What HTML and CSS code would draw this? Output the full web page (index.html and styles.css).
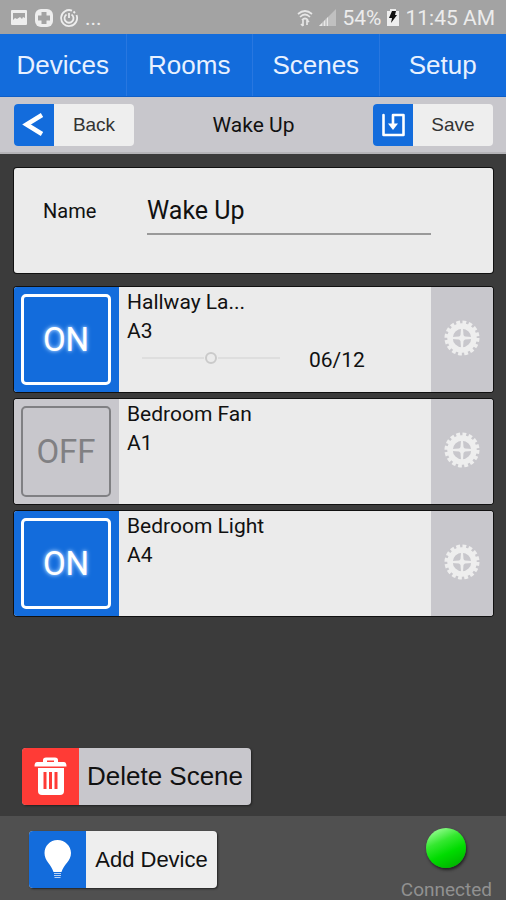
FILE: index.html
```html
<!DOCTYPE html>
<html lang="en">
<head>
<meta charset="utf-8">
<meta name="viewport" content="width=device-width, initial-scale=1">
<title>Wake Up</title>
<link rel="stylesheet" href="styles.css">
</head>
<body>
<svg class="defs" width="0" height="0" aria-hidden="true">
  <symbol id="gear" viewBox="-18 -18 36 36">
    <circle r="12" fill="none" stroke="currentColor" stroke-width="5.500"/>
    <circle r="15.500" fill="none" stroke="currentColor" stroke-width="4" stroke-dasharray="3.700 2.387"/>
    <path d="M-1-10H1L1.500-3Q2-2 3-1.500L10-1V1L3 1.500Q2 2 1.500 3L1 10H-1L-1.500 3Q-2 2-3 1.500L-10 1V-1L-3-1.500Q-2-2-1.500-3Z" fill="currentColor"/>
  </symbol>
</svg>
<div class="app">
  <header class="status">
    <div class="status-group">
      <svg width="18" height="18" viewBox="0 0 18 18"><path fill="#eee" fill-rule="evenodd" d="M2 1H16Q17 1 17 2V15Q17 16 16 16H2Q1 16 1 15V2Q1 1 2 1ZM3 4V11L5 9L7 10L10 8L12 10L13 8L15 9V4Z"/></svg>
      <svg width="18" height="18" viewBox="0 0 18 18"><rect width="18" height="18" rx="6" fill="#eee"/><path d="M9 3V15M3 9H15" stroke="#a3a3a3" stroke-width="5"/></svg>
      <svg width="18" height="18" viewBox="0 0 18 18" fill="none" stroke="#eee" stroke-width="1.8"><path d="M12 1.600A8 8 0 1 0 16.500 6M13.500 2.500L15 4"/><path d="M6.500 5.500A4.500 4.500 0 1 0 11.500 5.500M9 4V9"/></svg>
      <span>...</span>
    </div>
    <div class="status-group status-right">
      <svg width="16" height="18" viewBox="0 0 16 18" fill="none" stroke="#e6e6e6" stroke-width="1.700"><path d="M1 5Q8-1 15 5M3 8Q8 3 13 8M5 11Q8 8 11 11"/><path d="M6 11V17M4 15L6 17M10 16V11M10 11L12 13"/></svg>
      <svg width="17" height="17" viewBox="0 0 17 17"><path d="M0 17L17 0V17Z" fill="#c0c0c0"/><path d="M0 17L9 8V17Z" fill="#e8e8e8"/><path d="M4 12V17M7 9V17" stroke="#aaa"/></svg>
      <span>54%</span>
      <svg width="12" height="17" viewBox="0 0 12 17"><path d="M3 0H9V2H12V17H0V2H3Z" fill="#eee"/><path d="M5 2H9L8 6H10L4 14L5 9H2Z" fill="#111"/></svg>
      <span class="clock">11:45 AM</span>
    </div>
  </header>

  <nav class="tabs">
    <a href="#devices">Devices</a>
    <a href="#rooms">Rooms</a>
    <a href="#scenes">Scenes</a>
    <a href="#setup">Setup</a>
  </nav>

  <div class="toolbar">
    <button class="btn btn-small" type="button">
      <span class="btn-icon"><svg width="40" height="42" viewBox="0 0 40 42"><path d="M28 11L12.500 20.500L28 30" fill="none" stroke="#fff" stroke-width="4.500"/></svg></span>
      <span class="btn-label">Back</span>
    </button>
    <h1>Wake Up</h1>
    <button class="btn btn-small" type="button">
      <span class="btn-icon"><svg width="40" height="42" viewBox="0 0 40 42" fill="none" stroke="#fff" stroke-width="2.600" stroke-linejoin="round" stroke-linecap="round"><path d="M10.500 11V31H30.500V11H20V22"/><path d="M15 19.500H25L20 26Z" fill="#fff" stroke="none"/></svg></span>
      <span class="btn-label">Save</span>
    </button>
  </div>

  <main>
    <section class="panel name-panel">
      <label for="scene-name">Name</label>
      <input id="scene-name" type="text" value="Wake Up">
    </section>

    <ul class="devices">
      <li class="panel device">
        <button class="toggle on" type="button" aria-pressed="true"><span>ON</span></button>
        <div class="info">
          <h2>Hallway La...</h2>
          <p>A3</p>
          <div class="dimmer">
            <input type="range" min="0" max="12" value="6" aria-label="Level">
            <span>06/12</span>
          </div>
        </div>
        <button class="gear" type="button" aria-label="Settings"><svg width="36" height="36"><use href="#gear"/></svg></button>
      </li>
      <li class="panel device">
        <button class="toggle" type="button" aria-pressed="false"><span>OFF</span></button>
        <div class="info">
          <h2>Bedroom Fan</h2>
          <p>A1</p>
        </div>
        <button class="gear" type="button" aria-label="Settings"><svg width="36" height="36"><use href="#gear"/></svg></button>
      </li>
      <li class="panel device">
        <button class="toggle on" type="button" aria-pressed="true"><span>ON</span></button>
        <div class="info">
          <h2>Bedroom Light</h2>
          <p>A4</p>
        </div>
        <button class="gear" type="button" aria-label="Settings"><svg width="36" height="36"><use href="#gear"/></svg></button>
      </li>
    </ul>

    <button class="btn btn-large delete" type="button">
      <span class="btn-icon"><svg width="57" height="57" viewBox="0 0 57 57"><path d="M21 14V12Q21 9.500 24 9.500H33Q36 9.500 36 12V14H42Q44.500 14 44.500 18.500H12.500Q12.500 14 15 14ZM25 14H32V12.500H25Z" fill="#fff" fill-rule="evenodd"/><path d="M16 20H42V43Q42 47 38 47H20Q16 47 16 43Z" fill="#fff"/><path d="M23 24V41M28.500 24V41M34 24V41" stroke="#ff3b36" stroke-width="3"/></svg></span>
      <span class="btn-label">Delete Scene</span>
    </button>
  </main>

  <footer>
    <button class="btn btn-large add" type="button">
      <span class="btn-icon"><svg width="57" height="57" viewBox="0 0 57 57"><path d="M28.500 9C21 9 15.500 15 15.500 22C15.500 30 22 33 24.500 41H32.500C35 33 42 30 42 22C42 15 36 9 28.500 9Z" fill="#fff"/><path d="M25 42.500H32M25 44.500H32M25.500 46.500H31.500" stroke="#b9d3f5" stroke-width="1.200"/></svg></span>
      <span class="btn-label">Add Device</span>
    </button>
    <div class="connection">
      <span class="led"></span>
      <span>Connected</span>
    </div>
  </footer>
</div>
</body>
</html>
```
FILE: styles.css
```css
* {
  box-sizing: border-box;
}

body {
  margin: 0;
  background: #3b3b3b;
  color: #111;
  font-family: Roboto, "Liberation Sans", sans-serif;
}

button,
input {
  border: 0;
  padding: 0;
  margin: 0;
  font: inherit;
  color: inherit;
  background: none;
}

svg {
  display: block;
}

h1,
h2,
p,
ul {
  margin: 0;
  padding: 0;
  font-weight: 400;
}

.defs {
  position: absolute;
}

.app {
  display: flex;
  flex-direction: column;
  min-height: 100vh;
}

.status {
  display: flex;
  justify-content: space-between;
  align-items: center;
  height: 34px;
  padding: 1px 11px 0 10px;
  background: #a3a3a3;
  color: #ececec;
  font-size: 21px;
  line-height: 24px;
}

.status-group {
  display: flex;
  align-items: center;
  gap: 7px;
}

.status-right {
  gap: 6px;
}

.tabs {
  display: grid;
  grid-template-columns: repeat(4, 1fr);
  height: 63px;
  background: #136cdc;
  border-bottom: 1px solid #0f5fc8;
}

.tabs a {
  display: flex;
  align-items: center;
  justify-content: center;
  color: #e8f1ff;
  font-family: "Liberation Sans", sans-serif;
  font-size: 26px;
  text-decoration: none;
}

.tabs a:not(:last-child) {
  border-right: 1px solid #2877e0;
}

.toolbar {
  display: flex;
  align-items: center;
  justify-content: space-between;
  height: 57px;
  padding: 0 13px 0 14px;
  background: #c8c7cc;
  border-bottom: 2px solid #b5b4b8;
}

.toolbar h1 {
  font-size: 21px;
}

.btn {
  display: flex;
  align-items: stretch;
  overflow: hidden;
  border-radius: 4px;
  background: #eee;
  font-family: "Liberation Sans", sans-serif;
}

.btn-icon {
  background: #136cdc;
}

.btn-label {
  display: flex;
  flex: 1;
  align-items: center;
  justify-content: center;
}

.btn-small {
  width: 120px;
  height: 42px;
  font-size: 19px;
  color: #333;
}

.btn-large {
  height: 57px;
  box-shadow: 1px 1px 2px #222;
}

main {
  display: flex;
  flex: 1;
  flex-direction: column;
  padding: 14px 13px 11px 14px;
}

.panel {
  background: #ebebeb;
  border-radius: 3px;
  box-shadow: 0 0 0 1px #111;
}

.name-panel {
  display: flex;
  align-items: flex-start;
  height: 105px;
  padding: 22px 62px 0 29px;
  margin-bottom: 14px;
}

.name-panel label {
  width: 104px;
  font-size: 20px;
  line-height: 42px;
}

.name-panel input {
  flex: 1;
  min-width: 0;
  height: 45px;
  padding-bottom: 2px;
  border-bottom: 2px solid #999;
  border-radius: 0;
  font-size: 25px;
  outline: 0;
}

.devices {
  display: grid;
  gap: 7px;
  list-style: none;
}

.device {
  display: flex;
  height: 105px;
  overflow: hidden;
}

.toggle {
  display: flex;
  width: 105px;
  padding: 7px 8px 7px 7px;
  background: #c8c7cc;
  color: #808083;
  font-size: 33px;
}

.toggle span {
  display: flex;
  flex: 1;
  align-items: center;
  justify-content: center;
  border: 2px solid #808083;
  border-radius: 5px;
}

.toggle.on {
  background: #136cdc;
  color: #fff;
  text-shadow: 0 0 5px #9cc9ff, 0 0 3px #9cc9ff;
}

.toggle.on span {
  border: 3px solid #fff;
}

.info {
  flex: 1;
  padding: 1px 8px 0;
  font-size: 21px;
  line-height: 29px;
}

.info h2 {
  font-size: 21px;
}

.dimmer {
  display: flex;
  align-items: flex-start;
  gap: 29px;
  padding-left: 15px;
}

.dimmer input {
  width: 138px;
  height: 24px;
  appearance: none;
}

.dimmer input::-webkit-slider-runnable-track {
  height: 12px;
  background: linear-gradient(#dedede, #dedede) 0 5px / 62px 2px no-repeat, linear-gradient(#dedede, #dedede) 100% 5px / 62px 2px no-repeat;
}

.dimmer input::-webkit-slider-thumb {
  width: 12px;
  height: 12px;
  border: 2px solid #cacaca;
  border-radius: 50%;
  background: #ebebeb;
  appearance: none;
}

.gear {
  display: flex;
  align-items: center;
  justify-content: center;
  width: 62px;
  padding-bottom: 3px;
  background: #c8c7cc;
  color: #eee;
}

.delete {
  width: 229px;
  margin: auto 0 0 8px;
  background: #c8c7cc;
  font-size: 26px;
}

.delete .btn-icon {
  background: #ff3b36;
}

footer {
  display: flex;
  align-items: flex-start;
  justify-content: space-between;
  height: 84px;
  padding: 15px 14px 0 29px;
  background: #505050;
}

.add {
  width: 188px;
  font-size: 22px;
}

.connection {
  display: flex;
  flex-direction: column;
  align-items: center;
  gap: 10px;
  margin-top: -3px;
  color: #919191;
  font-size: 19px;
  line-height: 24px;
}

.led {
  width: 40px;
  height: 40px;
  border-radius: 50%;
  background: linear-gradient(155deg, #a4ffa0 5%, #35e830 35%, #00dc00 60%, #00ad00 95%);
  box-shadow: 1px 2px 3px #222;
}
```
